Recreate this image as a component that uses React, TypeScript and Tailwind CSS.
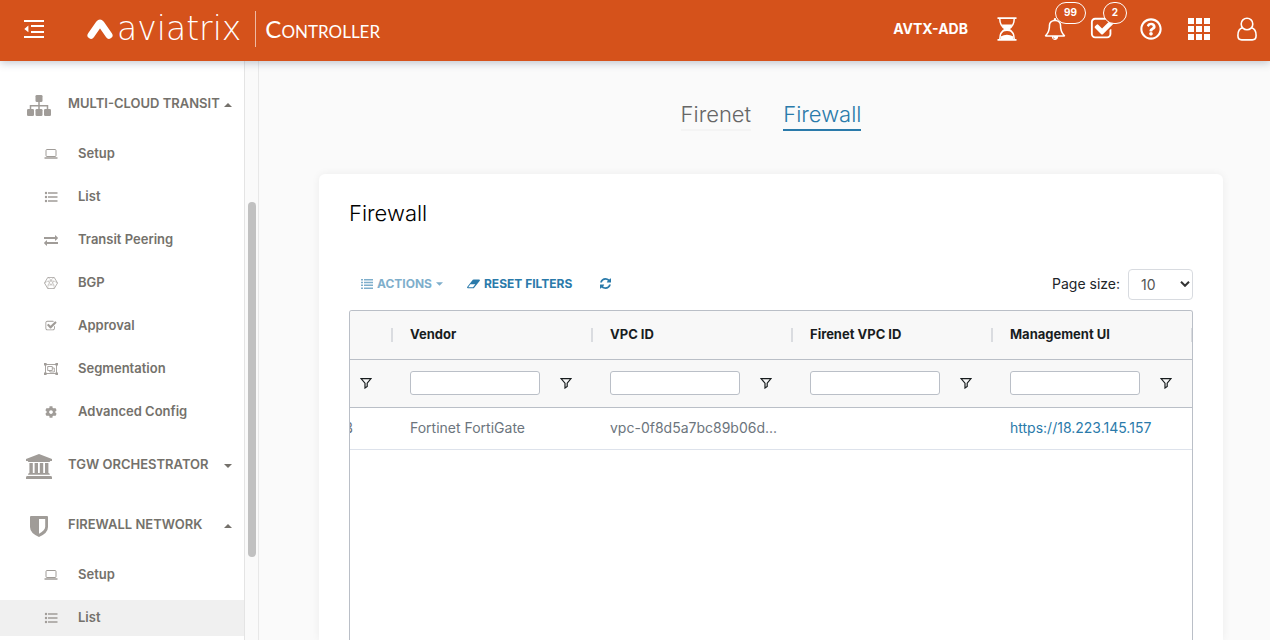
import React from "react";
import { FaCog, FaRegQuestionCircle } from "react-icons/fa";

interface IconProps {
  className?: string;
}

const OutdentIcon: React.FC<IconProps> = ({ className }) => (
  <svg viewBox="0 0 20 18" className={className} fill="currentColor">
    <path d="M0 0h20v2H0zM7 5h13v2H7zM7 11h13v2H7zM0 16h20v2H0zM4.400 5.600v6.600L.3 8.900z" />
  </svg>
);

const LogoMark: React.FC<IconProps> = ({ className }) => (
  <svg viewBox="0 0 26 20" className={className} fill="none">
    <path d="M4 16.200 12.200 4.600q.8-1 1.600 0L22 16.200" stroke="white" strokeWidth="7" strokeLinecap="round" strokeLinejoin="round" />
  </svg>
);

const HourglassIcon: React.FC<IconProps> = ({ className }) => (
  <svg viewBox="0 0 20 24" className={className}>
    <path d="M.5 1.200h19M.5 22.800h19" stroke="currentColor" strokeWidth="1.800" />
    <path d="M2.800 2c0 5 2 8 5.600 10-3.600 2-5.600 5-5.600 10M17.200 2c0 5-2 8-5.600 10 3.600 2 5.600 5 5.600 10" fill="none" stroke="currentColor" strokeWidth="1.500" />
    <path d="M4.600 7.500h10.800c-1 2.300-2.500 3.700-4.200 4.500 1.200.5 2.200 1.500 3 2.700q-4.200-1.600-8.400 0c.8-1.200 1.800-2.200 3-2.700-1.700-.8-3.200-2.200-4.200-4.500zM3.600 19.500q6.400-3.500 12.800 0V22H3.600z" fill="currentColor" />
  </svg>
);

const BellIcon: React.FC<IconProps> = ({ className }) => (
  <svg viewBox="0 0 1792 1792" className={className} fill="currentColor">
    <path d="M912 1696q0-16-16-16-59 0-101.5-42.5t-42.5-101.5q0-16-16-16t-16 16q0 73 51.5 124.5t124.5 51.5q16 0 16-16zm-666-288h1300q-266-300-266-832 0-51-24-105t-69-103-121.5-80.5-169.5-31.5-169.5 31.5-121.5 80.5-69 103-24 105q0 532-266 832zm1482 0q0 52-38 90t-90 38h-448q0 106-75 181t-181 75-181-75-75-181h-448q-52 0-90-38t-38-90q50-42 91-88t85-119.5 74.5-158.5 50-206 19.5-260q0-152 117-282.5t307-158.5q-8-19-8-39 0-40 28-68t68-28 68 28 28 68q0 20-8 39 190 28 307 158.5t117 282.5q0 139 19.5 260t50 206 74.5 158.5 85 119.5 91 88z" />
  </svg>
);

const CheckSquareIcon: React.FC<IconProps> = ({ className }) => (
  <svg viewBox="0 0 1792 1792" className={className} fill="currentColor">
    <path d="M1472 930v318q0 119-84.5 203.5t-203.5 84.5h-832q-119 0-203.5-84.5t-84.5-203.5v-832q0-119 84.5-203.5t203.5-84.5h832q63 0 117 25 15 7 18 23 3 17-9 29l-49 49q-10 10-23 10-3 0-9-2-23-6-45-6h-832q-66 0-113 47t-47 113v832q0 66 47 113t113 47h832q66 0 113-47t47-113v-254q0-13 9-22l64-64q10-10 23-10 6 0 12 3 20 8 20 29zm231-489l-814 814q-24 24-57 24t-57-24l-430-430q-24-24-24-57t24-57l110-110q24-24 57-24t57 24l263 263 647-647q24-24 57-24t57 24l110 110q24 24 24 57t-24 57z" />
  </svg>
);

const GridIcon: React.FC<IconProps> = ({ className }) => (
  <svg viewBox="0 0 22 22" className={className} fill="currentColor">
    <path d="M0 0h6v6H0zM8 0h6v6H8zM16 0h6v6h-6zM0 8h6v6H0zM8 8h6v6H8zM16 8h6v6h-6zM0 16h6v6H0zM8 16h6v6H8zM16 16h6v6h-6z" />
  </svg>
);

const UserIcon: React.FC<IconProps> = ({ className }) => (
  <svg viewBox="0 0 20 24" className={className} fill="none" stroke="currentColor" strokeWidth="1.600">
    <circle cx="10" cy="7" r="5.800" />
    <path d="M5.600 10.800C2.400 11.600.9 14.500.9 18.500c0 2.800 1.500 4.400 3.800 4.400h10.600c2.300 0 3.800-1.600 3.800-4.400 0-4-1.500-6.900-4.700-7.700" />
  </svg>
);

const SitemapIcon: React.FC<IconProps> = ({ className }) => (
  <svg viewBox="0 0 24 21" className={className} fill="currentColor">
    <rect x="8.500" width="7" height="7" rx="1.300" />
    <rect y="14" width="7" height="7" rx="1.300" />
    <rect x="8.500" y="14" width="7" height="7" rx="1.300" />
    <rect x="17" y="14" width="7" height="7" rx="1.300" />
    <path d="M3.500 14v-3.200h17V14M12 6v8" fill="none" stroke="currentColor" strokeWidth="1.500" />
  </svg>
);

const BankIcon: React.FC<IconProps> = ({ className }) => (
  <svg viewBox="0 0 26 25" className={className} fill="currentColor">
    <path d="M13 0l13 5v2h-1.800q0 .9-1 .9H2.800q-1 0-1-.9H0V5zM3.400 9h3.400v10h1.800V9H12v10h1.800V9h3.400v10H19V9h3.400v10q1.500 0 1.500 1.700H2q0-1.700 1.400-1.700zM1.500 22h23q1.500 0 1.500 1.400V25H0v-1.600Q0 22 1.500 22z" />
  </svg>
);

const ShieldIcon: React.FC<IconProps> = ({ className }) => (
  <svg viewBox="0 0 18 21" className={className} fill="currentColor" fillRule="evenodd">
    <path d="M1 0h16q1 0 1 1v10q0 6-9 10Q0 17 0 11V1q0-1 1-1zM9 3v14.800q6.200-3.300 6.200-7V3z" />
  </svg>
);

const LaptopIcon: React.FC<IconProps> = ({ className }) => (
  <svg viewBox="0 0 14 12" className={className} fill="none" stroke="currentColor">
    <rect x="2" y="1.500" width="10" height="7" rx="1" strokeWidth="1" />
    <path d="M.5 10h13" strokeWidth="1.500" />
  </svg>
);

const ListIcon: React.FC<IconProps> = ({ className }) => (
  <svg viewBox="0 0 14 12" className={className} fill="currentColor">
    <path d="M4 1.200h9.500v1.600H4zM4 5.200h9.500v1.600H4zM4 9.200h9.500v1.600H4z" />
    <circle cx="2" cy="2" r="1.200" />
    <circle cx="2" cy="6" r="1.200" />
    <circle cx="2" cy="10" r="1.200" />
  </svg>
);

const ExchangeIcon: React.FC<IconProps> = ({ className }) => (
  <svg viewBox="0 128 1792 1536" className={className} fill="currentColor">
    <path d="M1792 1184v192q0 13-9.5 22.5t-22.5 9.5h-1376v192q0 13-9.5 22.5t-22.5 9.5q-12 0-24-10l-319-320q-9-9-9-22 0-14 9-23l320-320q9-9 23-9 13 0 22.5 9.5t9.5 22.5v192h1376q13 0 22.5 9.5t9.5 22.5zm0-544q0 14-9 23l-320 320q-9 9-23 9-13 0-22.5-9.5t-9.5-22.5v-192h-1376q-13 0-22.5-9.5t-9.5-22.5v-192q0-13 9.500-22.500t22.500-9.500h1376v-192q0-14 9-23t23-9q12 0 24 10l319 319q9 9 9 23z" />
  </svg>
);

const HexIcon: React.FC<IconProps> = ({ className }) => (
  <svg viewBox="0 1 14 12" className={className} fill="none" stroke="currentColor" strokeWidth=".8">
    <path d="M3.800 1.400h6.400L13.500 7l-3.300 5.600H3.800L.5 7z" />
    <path d="M3.800 1.300 7 4l3.200-2.700M.5 7 4 5l3 4 3-4 3.500 2M3.800 12.700 4 9l3-5 3 5 .2 3.700M4 9h6M4 5h6" strokeWidth=".45" />
  </svg>
);

const ObjectGroupIcon: React.FC<IconProps> = ({ className }) => (
  <svg viewBox="0 0 14 12" className={className} fill="none" stroke="currentColor" strokeWidth=".9">
    <rect x="1.500" y="1.500" width="11" height="9" />
    <path d="M3.700 3.500h4.600v4H3.700zM8.300 5h2v4H5.800V7.500" />
    <path d="M0 0h2.600v2.600H0zM11.400 0H14v2.600h-2.600zM0 9.400h2.600V12H0zM11.400 9.400H14V12h-2.600z" fill="currentColor" stroke="none" />
  </svg>
);

const ActionsIcon: React.FC<IconProps> = ({ className }) => (
  <svg viewBox="0 0 12 10" className={className} fill="currentColor">
    <path d="M0 0h2v1.500H0zM3 0h9v1.500H3zM0 2.800h2v1.500H0zM3 2.800h9v1.500H3zM0 5.600h2v1.500H0zM3 5.600h9v1.500H3zM0 8.400h2v1.500H0zM3 8.400h9v1.500H3z" />
  </svg>
);

const EraserIcon: React.FC<IconProps> = ({ className }) => (
  <svg viewBox="0 0 13 10" className={className} fill="currentColor" fillRule="evenodd">
    <path d="M5.800.8Q6.200.4 6.800.4h5.300q1.100.2.7 1.300L7.200 8.800q-.4.500-1 .500H.9Q-.2 9 .2 8zM6 8.200l2.300-2.900H3.400L1.200 8.200z" />
  </svg>
);

const RefreshIcon: React.FC<IconProps> = ({ className }) => (
  <svg viewBox="128 128 1536 1536" className={className} fill="currentColor">
    <path d="M1639 1056q0 5-1 7-64 268-268 434.500t-478 166.500q-146 0-282.500-55t-243.500-157l-129 129q-19 19-45 19t-45-19-19-45v-448q0-26 19-45t45-19h448q26 0 45 19t19 45-19 45l-137 137q71 66 161 102t187 36q134 0 250-65t186-179q11-17 53-117 8-23 30-23h192q13 0 22.500 9.500t9.500 22.500zm25-800v448q0 26-19 45t-45 19h-448q-26 0-45-19t-19-45 19-45l138-138q-148-137-349-137-134 0-250 65t-186 179q-11 17-53 117-8 23-30 23h-199q-13 0-22.500-9.500t-9.500-22.500v-7q65-268 270-434.500t480-166.500q146 0 284 55.500t245 156.500l130-129q19-19 45-19t45 19 19 45z" />
  </svg>
);

const FunnelIcon: React.FC<IconProps> = ({ className }) => (
  <svg viewBox="0 0 12 12" className={className} fill="none" stroke="currentColor" strokeWidth="1.200">
    <path d="M1 1.600h10L7.200 6.200v3.300L5 11V6.200z" />
  </svg>
);

const CaretIcon: React.FC<IconProps> = ({ className }) => (
  <svg viewBox="0 0 8 4" className={className} fill="currentColor">
    <path d="M0 0h8L4 4z" />
  </svg>
);

const SelectArrow: React.FC<IconProps> = ({ className }) => (
  <svg viewBox="0 0 10 6" className={className} fill="none" stroke="currentColor" strokeWidth="2">
    <path d="M1 .8l4 4 4-4" />
  </svg>
);

interface MenuItem {
  label: string;
  icon: React.FC<IconProps>;
  active?: boolean;
}

interface MenuGroup {
  label: string;
  icon: React.FC<IconProps>;
  iconClass: string;
  open: boolean;
  items: MenuItem[];
}

const menu: MenuGroup[] = [
  {
    label: "MULTI-CLOUD TRANSIT",
    icon: SitemapIcon,
    iconClass: "w-6 h-[21px]",
    open: true,
    items: [
      { label: "Setup", icon: LaptopIcon },
      { label: "List", icon: ListIcon },
      { label: "Transit Peering", icon: ExchangeIcon },
      { label: "BGP", icon: HexIcon },
      { label: "Approval", icon: CheckSquareIcon },
      { label: "Segmentation", icon: ObjectGroupIcon },
      { label: "Advanced Config", icon: FaCog },
    ],
  },
  { label: "TGW ORCHESTRATOR", icon: BankIcon, iconClass: "w-[26px] h-[25px]", open: false, items: [] },
  {
    label: "FIREWALL NETWORK",
    icon: ShieldIcon,
    iconClass: "w-[18px] h-[21px]",
    open: true,
    items: [
      { label: "Setup", icon: LaptopIcon },
      { label: "List", icon: ListIcon, active: true },
    ],
  },
];

const columns = ["Vendor", "VPC ID", "Firenet VPC ID", "Management UI"];

const Header = () => (
  <header className="relative z-10 flex h-[61px] shrink-0 items-center justify-between bg-[#d5521b] pr-3 pb-1 pl-6 text-white shadow-[0_2px_8px_rgba(60,75,100,0.3)]">
    <div className="flex items-center">
      <button aria-label="Toggle menu">
        <OutdentIcon className="h-[18px] w-5" />
      </button>
      <a href="#" className="ml-[43px] flex items-center">
        <LogoMark className="h-5 w-[26px]" />
        <span className="ml-1 font-['DejaVu_Sans'] text-[33px] leading-9 font-extralight">aviatrix</span>
        <span className="mr-[9px] ml-[14px] h-9 w-px bg-white/60" />
        <span className="font-[Lato] text-2xl [font-variant:small-caps]">Controller</span>
      </a>
    </div>
    <div className="flex items-center">
      <span className="mr-7 text-sm font-bold">AVTX-ADB</span>
      <div className="flex items-center gap-[26px]">
        <button aria-label="Tasks" className="flex w-[22px] justify-center">
          <HourglassIcon className="h-6 w-5" />
        </button>
        <button aria-label="Notifications" className="relative flex w-[22px] justify-center">
          <BellIcon className="size-[22px]" />
          <span className="absolute -top-4 left-[11px] flex h-[22px] w-[31px] items-center justify-center rounded-full border border-white bg-[#d5521b] text-[10px] font-bold">99</span>
        </button>
        <button aria-label="Approvals" className="relative flex w-[22px] justify-center">
          <CheckSquareIcon className="size-[26px] shrink-0" />
          <span className="absolute -top-[14px] left-[11px] flex h-[22px] w-6 items-center justify-center rounded-full border border-white bg-[#d5521b] text-[10px] font-bold">2</span>
        </button>
        <button aria-label="Help">
          <FaRegQuestionCircle className="size-[22px]" />
        </button>
        <button aria-label="Apps">
          <GridIcon className="size-[22px]" />
        </button>
        <button aria-label="Account" className="flex w-[22px] justify-center">
          <UserIcon className="h-6 w-5" />
        </button>
      </div>
    </div>
  </header>
);

const Sidebar = () => (
  <aside className="flex w-[259px] shrink-0 border-r border-[#e8e8e8]">
    <nav className="flex-1 overflow-hidden border-r border-[#e4e4e4] bg-white pt-[14px] text-[13px] font-semibold text-[#74716b]">
      {menu.map((group) => (
        <div key={group.label}>
          <button className="flex h-[60px] w-full items-center pr-3 pl-[25px]">
            <span className="flex w-[27px] justify-center text-[#a09c98]">
              <group.icon className={group.iconClass} />
            </span>
            <span className="ml-4 flex-1 pb-0.5 text-left whitespace-nowrap">{group.label}</span>
            <CaretIcon className={group.open ? "h-1 w-2 rotate-180" : "h-1 w-2"} />
          </button>
          {group.open && (
            <ul className="flex flex-col gap-[7px] pt-px pb-1.5">
              {group.items.map((item) => (
                <li key={item.label}>
                  <a href="#" className={item.active ? "flex h-9 items-center bg-[#f0f0f0] pl-11" : "flex h-9 items-center pl-11"}>
                    <item.icon className="h-3 w-[14px] text-[#a09c98]" />
                    <span className="ml-5">{item.label}</span>
                  </a>
                </li>
              ))}
            </ul>
          )}
        </div>
      ))}
    </nav>
    <div className="w-[13px] shrink-0 pt-[141px] pl-[3px]">
      <div className="h-[355px] w-2 rounded-full bg-[#c1c1c1]" />
    </div>
  </aside>
);

const FirewallTable = () => (
  <div className="flex-1 overflow-hidden rounded-t-[3px] border border-b-0 border-[#babfc7]">
    <table className="w-[calc(100%+1px)] table-fixed border-collapse text-left text-[13px]">
      <colgroup>
        <col className="w-[43px]" />
        <col />
        <col />
        <col />
        <col />
      </colgroup>
      <thead className="bg-[#f8f8f8] text-[#181d1f]">
        <tr className="h-12 border-b border-[#babfc7]">
          <th className="p-0">
            <div className="ml-auto h-[14px] w-0.5 bg-[#dadce0]" />
          </th>
          {columns.map((name) => (
            <th key={name} className="p-0 pl-[17px] font-bold">
              <div className="flex items-center justify-between">
                {name}
                <span className="h-[14px] w-0.5 bg-[#dadce0]" />
              </div>
            </th>
          ))}
        </tr>
        <tr className="h-12 border-b border-[#babfc7]">
          <td className="p-0 pr-[21px]">
            <button aria-label="Open filter" className="ml-auto block">
              <FunnelIcon className="size-3" />
            </button>
          </td>
          {columns.map((name) => (
            <td key={name} className="p-0 pr-[21px] pl-[17px]">
              <div className="flex items-center justify-between">
                <input aria-label={`${name} filter`} className="h-6 w-[130px] rounded-[3px] border border-[#babfc7] bg-white px-1" />
                <button aria-label={`Open ${name} filter`}>
                  <FunnelIcon className="size-3" />
                </button>
              </div>
            </td>
          ))}
        </tr>
      </thead>
      <tbody className="text-sm text-[#6c757d]">
        <tr className="h-[42px] border-b border-[#dde2eb]">
          <td className="p-0">
            <div className="flex w-[3px] justify-end overflow-hidden">B</div>
          </td>
          <td className="truncate p-0 pl-[17px]">Fortinet FortiGate</td>
          <td className="truncate p-0 pl-[17px]">vpc-0f8d5a7bc89b06d...</td>
          <td className="p-0" />
          <td className="truncate p-0 pl-[17px]">
            <a href="https://18.223.145.157" className="text-[#2a7aaa]">
              https://18.223.145.157
            </a>
          </td>
        </tr>
      </tbody>
    </table>
  </div>
);

const App = () => {
  return (
    <div className="flex h-screen flex-col overflow-hidden bg-[#fafafa] font-[Inter,sans-serif]">
      <Header />
      <div className="flex min-h-0 flex-1">
        <Sidebar />
        <main className="flex min-w-0 flex-1 flex-col pt-[39px] pr-[47px] pl-[60px]">
          <nav className="flex justify-center gap-8 text-[22px] leading-7 font-light">
            <a href="#" className="border-b-2 border-[#f4f4f4] pb-px text-[#666]">
              Firenet
            </a>
            <a href="#" className="border-b-2 border-[#2a7aaa] pb-px text-[#2a7aaa]">
              Firewall
            </a>
          </nav>
          <section className="mt-[43px] flex flex-1 flex-col rounded-t-md bg-white px-[30px] pt-[25px] shadow-[0_0_8px_rgba(0,0,0,0.06)]">
            <h1 className="text-[22px] leading-7 font-light text-black">Firewall</h1>
            <div className="mt-[42px] mb-[10px] flex items-center justify-between">
              <div className="flex items-center gap-6 pb-0.5 pl-3 text-xs font-bold text-[#2a7aaa]">
                <button className="flex items-center gap-1 opacity-60" disabled>
                  <ActionsIcon className="h-[10px] w-3" />
                  ACTIONS
                  <CaretIcon className="h-1 w-[7px]" />
                </button>
                <button className="flex items-center gap-1">
                  <EraserIcon className="h-[10px] w-[13px]" />
                  RESET FILTERS
                </button>
                <button aria-label="Refresh" className="ml-1">
                  <RefreshIcon className="size-[11px]" />
                </button>
              </div>
              <div className="flex items-center gap-2">
                <label htmlFor="page-size" className="pb-0.5 text-sm text-[#212529]">
                  Page size:
                </label>
                <div className="relative">
                  <select id="page-size" className="h-[31px] w-[65px] appearance-none rounded border border-[#d8dbe0] bg-white pl-3 text-sm text-[#555]">
                    <option>10</option>
                    <option>25</option>
                    <option>50</option>
                  </select>
                  <SelectArrow className="pointer-events-none absolute top-3 right-[3px] h-[6px] w-[10px] text-[#333]" />
                </div>
              </div>
            </div>
            <FirewallTable />
          </section>
        </main>
      </div>
    </div>
  );
};

export default App;
